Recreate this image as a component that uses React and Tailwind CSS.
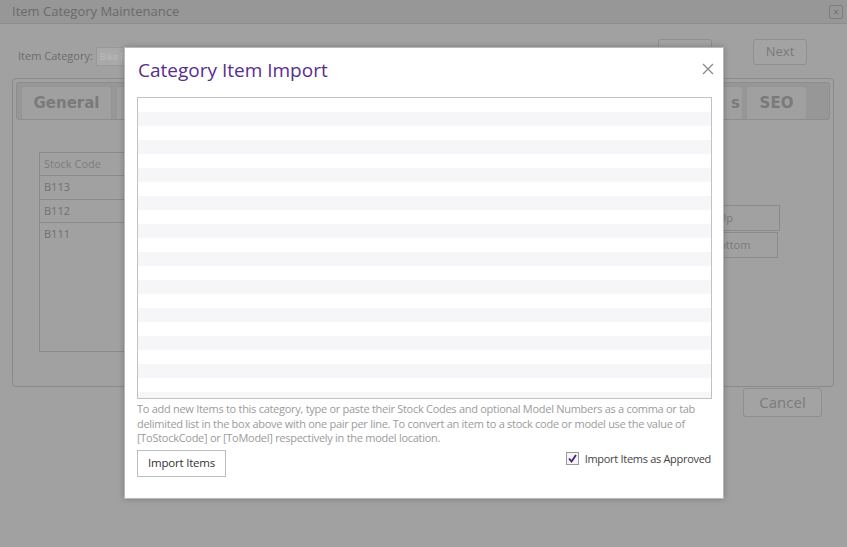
import React from "react";

const font = { fontFamily: '"Open Sans", "Noto Sans", Arial, sans-serif' };

function Background() {
  return (
    <div className="flex flex-col w-[847px] h-[547px] bg-[#a1a1a1]" style={font}>
      <div className="flex items-center justify-between h-[24px] pl-[12px] pr-[4px] bg-[#979797] border-b border-[#8c8c8c]">
        <span className="text-[13px] text-[#6a6a6a]">Item Category Maintenance</span>
        <span className="flex items-center justify-center w-[14px] h-[14px] border border-[#7d7d7d] rounded-[2px] text-[10px] leading-none text-[#707070]">×</span>
      </div>
      <div className="flex flex-col px-[12px] pt-[15px]">
        <div className="flex items-start h-[39px]">
          <div className="flex items-center gap-[3px] pl-[6px] pt-[8px]">
            <span className="text-[11px] text-[#6c6c6c]">Item Category:</span>
            <span className="flex items-center h-[19px] w-[200px] pl-[3px] bg-[#a9a9a9] border border-[#999] text-[9px] text-[#bdbdbd]">Bike Parts</span>
          </div>
          <div className="flex-1" />
          <div className="h-[26px] w-[54px] border border-[#8f8f8f] rounded-[3px] bg-[#a3a3a3]" />
          <div className="ml-[41px] mr-[28px] flex items-center justify-center h-[26px] w-[54px] border border-[#8f8f8f] rounded-[3px] bg-[#a3a3a3] text-[13px] text-[#7a7a7a]">Next</div>
        </div>
        <div className="flex flex-col h-[309px] w-[822px] border border-[#8a8a8a] rounded-[4px] p-[3px]">
          <div className="flex items-end h-[38px] pl-[4px] bg-[#979797] border border-[#8d8d8d] rounded-[3px]">
            <div className="flex items-center justify-center w-[91px] h-[33px] bg-[#a0a0a0] border border-[#959595] border-b-0 rounded-t-[3px] text-[15px] font-bold text-[#7a7a7a]" style={{ fontFamily: '"DejaVu Sans", Verdana, sans-serif' }}>General</div>
            <div className="w-[4px]" />
            <div className="w-[40px] h-[33px] bg-[#a0a0a0] border border-[#959595] border-b-0 rounded-t-[3px]" />
            <div className="flex-1" />
            <div className="flex items-center justify-end w-[60px] h-[33px] pr-[2px] bg-[#a0a0a0] border border-[#959595] border-b-0 rounded-t-[3px] text-[15px] font-bold text-[#7a7a7a]" style={{ fontFamily: '"DejaVu Sans", Verdana, sans-serif' }}>s</div>
            <div className="w-[3px]" />
            <div className="flex items-center justify-center w-[61px] h-[33px] bg-[#a0a0a0] border border-[#959595] border-b-0 rounded-t-[3px] text-[15px] font-bold text-[#7a7a7a]" style={{ fontFamily: '"DejaVu Sans", Verdana, sans-serif' }}>SEO</div>
            <div className="w-[22px]" />
          </div>
          <div className="flex pt-[32px] pl-[23px]">
            <div className="flex flex-col w-[200px] h-[200px] border border-[#8a8a8a] text-[11px] text-[#707070]">
              <div className="flex items-center h-[23px] pl-[4px] border-b border-[#8a8a8a] text-[#7c7c7c]">Stock Code</div>
              <div className="flex items-center h-[24px] pl-[4px] border-b border-[#8a8a8a]">B113</div>
              <div className="flex items-center h-[23px] pl-[4px] border-b border-[#8a8a8a]">B112</div>
              <div className="flex items-center h-[23px] pl-[4px]">B111</div>
            </div>
            <div className="flex-1" />
            <div className="flex flex-col items-end pt-[53px] pr-[50px] gap-[1px] text-[11px] text-[#7a7a7a]">
              <div className="flex items-center justify-center w-[140px] h-[26px] border border-[#8a8a8a]">Move Up</div>
              <div className="flex items-center justify-center w-[138px] h-[26px] mr-[2px] border border-[#8a8a8a]">Move to Bottom</div>
            </div>
          </div>
        </div>
        <div className="flex justify-end pr-[13px] pt-[1px]">
          <div className="flex items-center justify-center w-[79px] h-[29px] border border-[#8f8f8f] rounded-[3px] bg-[#a3a3a3] text-[15px] text-[#7b7b7b]">Cancel</div>
        </div>
      </div>
    </div>
  );
}

function Modal() {
  return (
    <div className="absolute left-[124px] top-[47px] w-[600px] h-[452px] bg-white border border-[#b9b9b9] shadow-[0_0_6px_rgba(0,0,0,0.25)] flex flex-col px-[12px]" style={font}>
      <div className="flex items-center justify-between h-[49px] pl-[1px]">
        <span className="text-[19px] text-[#5a2d8c] leading-none pb-[4px]">Category Item Import</span>
        <svg width="12" height="12" viewBox="0 0 12 12" className="mb-[8px] mr-[-3px]">
          <path d="M1 1 L11 11 M11 1 L1 11" stroke="#8a8a8a" strokeWidth="1.3" fill="none" />
        </svg>
      </div>
      <div className="h-[302px] w-[575px] border border-[#c2c2c2] bg-[repeating-linear-gradient(to_bottom,#ffffff_0px,#ffffff_14px,#f6f5f8_14px,#f6f5f8_28px)]" />
      <div className="pt-[3px] text-[11px] leading-[14.5px] tracking-[-0.28px] text-[#9b9b9b] whitespace-nowrap">
        <div>To add new Items to this category, type or paste their Stock Codes and optional Model Numbers as a comma or tab</div>
        <div>delimited list in the box above with one pair per line. To convert an item to a stock code or model use the value of</div>
        <div>[ToStockCode] or [ToModel] respectively in the model location.</div>
      </div>
      <div className="flex items-start justify-between pt-[4px] w-[575px]">
        <div className="flex items-center justify-center w-[89px] h-[27px] border border-[#bdbdbd] text-[11.5px] tracking-[-0.2px] text-[#333] pb-[1px]">Import Items</div>
        <div className="flex items-center gap-[6px] pt-[2px] pr-[1px]">
          <div className="flex items-center justify-center w-[13px] h-[13px] border border-[#9a9a9a] bg-[#f4f4f4]">
            <svg width="9" height="9" viewBox="0 0 9 9">
              <path d="M1 4.5 L3.5 7.5 L8 1" stroke="#4b1e7a" strokeWidth="1.8" fill="none" />
            </svg>
          </div>
          <span className="text-[11px] tracking-[-0.3px] text-[#444] leading-[13px]">Import Items as Approved</span>
        </div>
      </div>
    </div>
  );
}

export default function App() {
  return (
    <div className="relative w-[847px] h-[547px] overflow-hidden">
      <Background />
      <Modal />
    </div>
  );
}
